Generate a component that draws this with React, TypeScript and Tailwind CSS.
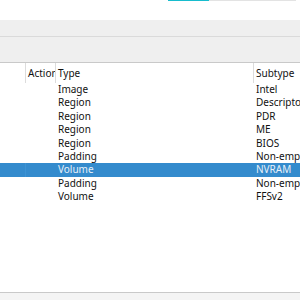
const rows: { type: string; subtype: string; selected?: boolean }[] = [
  { type: "Image", subtype: "Intel" },
  { type: "Region", subtype: "Descriptor" },
  { type: "Region", subtype: "PDR" },
  { type: "Region", subtype: "ME" },
  { type: "Region", subtype: "BIOS" },
  { type: "Padding", subtype: "Non-empty" },
  { type: "Volume", subtype: "NVRAM", selected: true },
  { type: "Padding", subtype: "Non-empty" },
  { type: "Volume", subtype: "FFSv2" },
];

const cols = "grid grid-cols-[25px_30px_198px_47px]";

export default function App() {
  return (
    <div
      className="flex h-[300px] w-[300px] flex-col overflow-hidden bg-white text-[10px] text-[#111]"
      style={{ fontFamily: '"Noto Sans", "Open Sans", sans-serif' }}
    >
      {/* tab indicator strip */}
      <div className="flex h-px shrink-0">
        <div className="w-[168px]" />
        <div className="w-[41px] bg-[#17bccd]" />
        <div className="w-[87px] bg-[#e3e3e3]" />
      </div>
      <div className="h-[19px] shrink-0 bg-white" />
      <div className="h-[16px] shrink-0 bg-[#efefef]" />
      <div className="h-px shrink-0 bg-[#dadada]" />
      <div className="h-[25px] shrink-0 bg-[#efefef]" />
      <div className="h-px shrink-0 bg-[#c9c9c9]" />

      {/* header */}
      <div className={`${cols} h-[20px] shrink-0 bg-white leading-[20px]`}>
        <div />
        <div className="overflow-hidden whitespace-nowrap border-l border-[#dcdcdc] pl-[2px]">Action</div>
        <div className="border-l border-[#dcdcdc] pl-[2px]">Type</div>
        <div className="overflow-hidden whitespace-nowrap border-l border-[#dcdcdc] pl-[2px]">Subtype</div>
      </div>

      {/* body */}
      <div className="flex-1 bg-white">
        {rows.map((r, i) => (
          <div
            key={i}
            className={`${cols} h-[13.4px] leading-[13.4px] ${
              r.selected ? "bg-[#348bcd] text-[#e8f0f8]" : ""
            }`}
          >
            <div />
            <div className={r.selected ? "border-l border-[#3d93d3]" : "border-l border-transparent"} />
            <div className="pl-[3px]">{r.type}</div>
            <div className="overflow-hidden whitespace-nowrap pl-[3px]">{r.subtype}</div>
          </div>
        ))}
      </div>

      <div className="h-px shrink-0 bg-[#c9c9c9]" />
      <div className="h-[7px] shrink-0 bg-[#f4f4f4]" />
    </div>
  );
}
